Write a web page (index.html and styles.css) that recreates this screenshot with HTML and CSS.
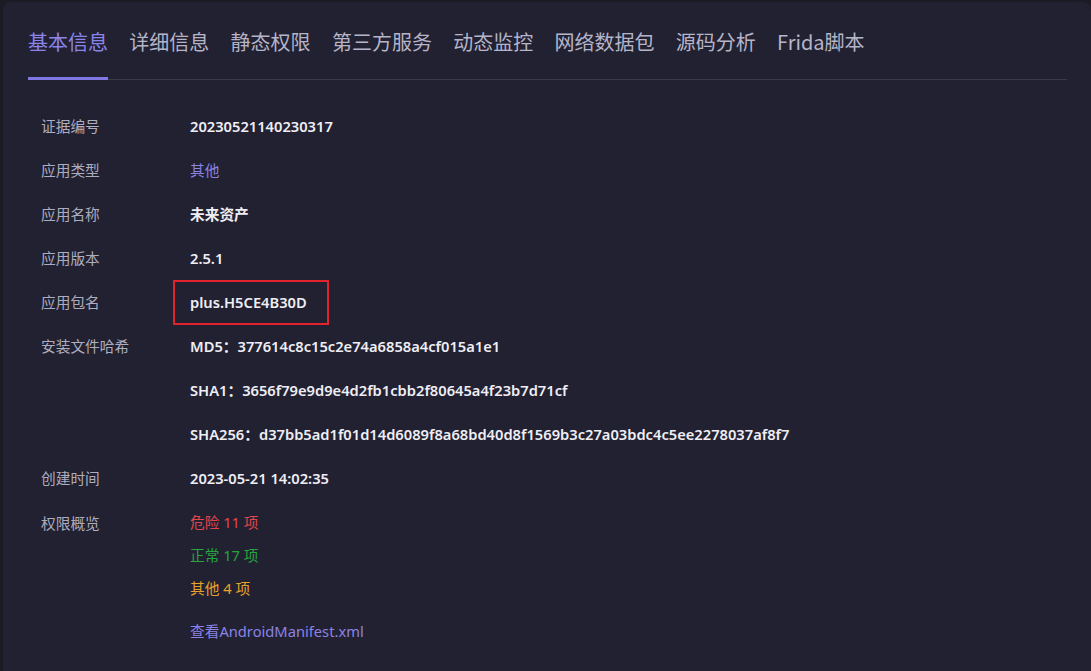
FILE: index.html
```html
<!DOCTYPE html>
<html lang="zh-CN">
<head>
<meta charset="utf-8">
<title>基本信息</title>
<link rel="stylesheet" href="styles.css">
</head>
<body>
<div class="card">
  <nav class="tabs">
    <a class="tab active">基本信息</a>
    <a class="tab">详细信息</a>
    <a class="tab">静态权限</a>
    <a class="tab">第三方服务</a>
    <a class="tab">动态监控</a>
    <a class="tab">网络数据包</a>
    <a class="tab">源码分析</a>
    <a class="tab">Frida脚本</a>
  </nav>
  <div class="info">
    <div class="row"><div class="label">证据编号</div><div class="value"><div class="line">20230521140230317</div></div></div>
    <div class="row"><div class="label">应用类型</div><div class="value"><div class="line purple">其他</div></div></div>
    <div class="row"><div class="label">应用名称</div><div class="value"><div class="line">未来资产</div></div></div>
    <div class="row"><div class="label">应用版本</div><div class="value"><div class="line">2.5.1</div></div></div>
    <div class="row"><div class="label">应用包名</div><div class="value"><div class="line"><span class="highlight">plus.H5CE4B30D</span></div></div></div>
    <div class="row"><div class="label">安装文件哈希</div><div class="value">
      <div class="line">MD5：377614c8c15c2e74a6858a4cf015a1e1</div>
      <div class="line">SHA1：3656f79e9d9e4d2fb1cbb2f80645a4f23b7d71cf</div>
      <div class="line">SHA256：d37bb5ad1f01d14d6089f8a68bd40d8f1569b3c27a03bdc4c5ee2278037af8f7</div>
    </div></div>
    <div class="row"><div class="label">创建时间</div><div class="value"><div class="line">2023-05-21 14:02:35</div></div></div>
    <div class="row perm"><div class="label">权限概览</div><div class="value">
      <div class="pline red">危险 11 项</div>
      <div class="pline green">正常 17 项</div>
      <div class="pline orange">其他 4 项</div>
      <a class="manifest">查看AndroidManifest.xml</a>
    </div></div>
  </div>
</div>
</body>
</html>
```

FILE: styles.css
```css
html, body {
  margin: 0;
  padding: 0;
  background: #1b1a25;
  height: 100%;
  overflow: hidden;
}
body {
  font-family: "Noto Sans", "Noto Sans CJK SC", sans-serif;
  font-size: 14.7px;
}
.card {
  margin: 2px 0 0 3px;
  background: #222131;
  border-radius: 8px 8px 0 0;
  padding: 0 24px 0 25px;
  height: 680px;
}
.tabs {
  display: flex;
  gap: 21.3px;
  border-bottom: 1px solid #3b3a4a;
}
.tab {
  font-family: "Noto Sans CJK SC", sans-serif;
  font-size: 20px;
  line-height: 28px;
  color: #b5b4c8;
  padding: 26px 0 21px;
  border-bottom: 3px solid transparent;
  margin-bottom: -1px;
  cursor: pointer;
}
.tab.active {
  color: #8b84ea;
  border-bottom-color: #7f78e4;
}
.info {
  margin-top: 24px;
  padding-left: 13px;
}
.row {
  display: flex;
}
.label {
  width: 149px;
  flex: none;
  font-family: "Noto Sans CJK SC", sans-serif;
  color: #aeadbf;
  height: 44px;
  line-height: 44px;
}
.value {
  color: #efeef5;
  font-weight: 600;
}
.line {
  height: 44px;
  line-height: 44px;
  white-space: nowrap;
}
.purple {
  color: #8a83e6;
  font-weight: 400;
}
.highlight {
  display: inline-block;
  box-sizing: border-box;
  width: 156px;
  height: 45px;
  line-height: 41px;
  margin: 0 0 0 -17px;
  padding-left: 15px;
  border: 2px solid #e2222d;
  vertical-align: top;
}
.perm .value {
  font-weight: 400;
  padding-top: 6px;
}
.perm .label {
  height: 33px;
  line-height: 33px;
  padding-top: 6px;
}
.pline {
  height: 33px;
  line-height: 33px;
}
.red { color: #e0464c; }
.green { color: #25a53c; }
.orange { color: #e8a12c; }
.manifest {
  display: block;
  margin-top: 15px;
  line-height: 22px;
  color: #8a83e6;
  cursor: pointer;
}
```
